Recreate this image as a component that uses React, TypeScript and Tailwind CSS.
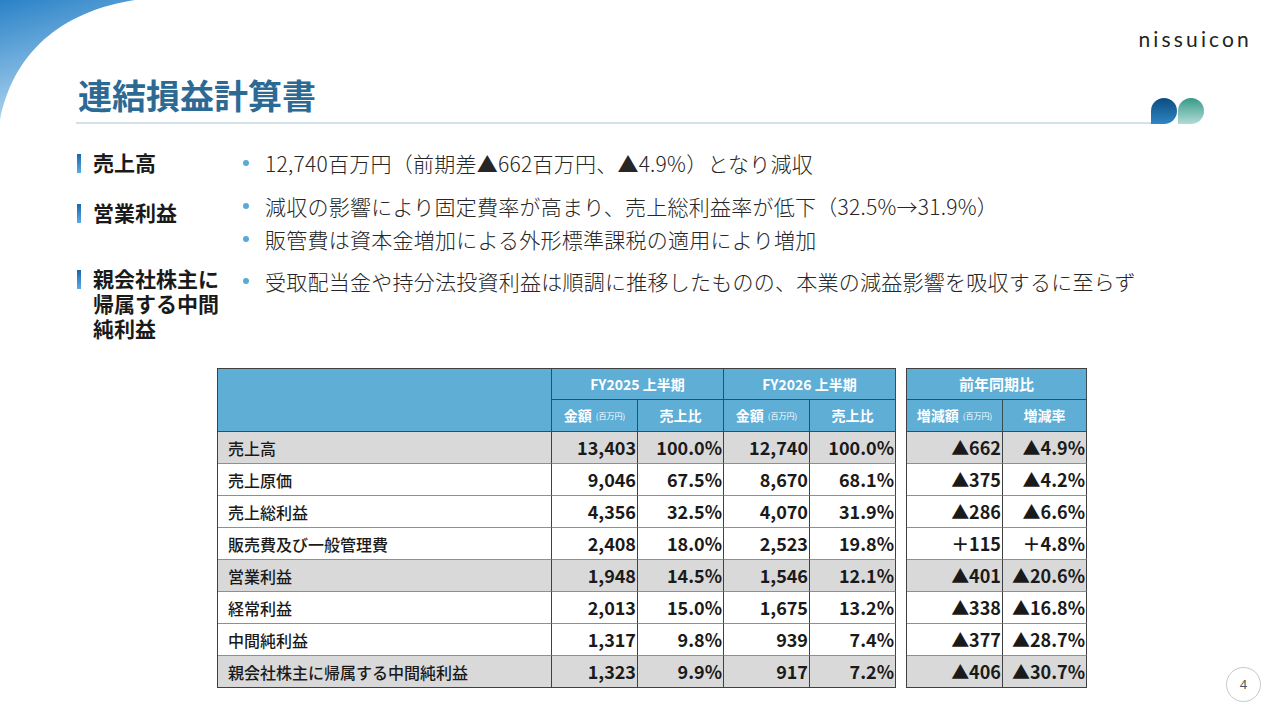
import React from "react";

type Row = {
  label: string;
  v: [string, string, string, string, string, string];
  shaded?: boolean;
};

const rows: Row[] = [
  { label: "売上高", v: ["13,403", "100.0%", "12,740", "100.0%", "▲662", "▲4.9%"], shaded: true },
  { label: "売上原価", v: ["9,046", "67.5%", "8,670", "68.1%", "▲375", "▲4.2%"] },
  { label: "売上総利益", v: ["4,356", "32.5%", "4,070", "31.9%", "▲286", "▲6.6%"] },
  { label: "販売費及び一般管理費", v: ["2,408", "18.0%", "2,523", "19.8%", "＋115", "＋4.8%"] },
  { label: "営業利益", v: ["1,948", "14.5%", "1,546", "12.1%", "▲401", "▲20.6%"], shaded: true },
  { label: "経常利益", v: ["2,013", "15.0%", "1,675", "13.2%", "▲338", "▲16.8%"] },
  { label: "中間純利益", v: ["1,317", "9.8%", "939", "7.4%", "▲377", "▲28.7%"] },
  { label: "親会社株主に帰属する中間純利益", v: ["1,323", "9.9%", "917", "7.2%", "▲406", "▲30.7%"], shaded: true },
];

function Label({ lines }: { lines: string[] }) {
  return (
    <div className="w-[163px] flex items-start">
      <div className="mt-[4px] w-[4px] h-[19px] bg-gradient-to-b from-[#1766ad] to-[#5aaee2]" />
      <div className="ml-[12px] text-[21px] leading-[25px] font-bold text-[#1a1a1a]">
        {lines.map((l) => (
          <div key={l}>{l}</div>
        ))}
      </div>
    </div>
  );
}

function Bullet({ text }: { text: string }) {
  return (
    <div className="flex items-center h-[26px]">
      <span className="ml-[3px] w-[6px] h-[6px] rounded-full bg-[#5ba9d6]" />
      <span className="ml-[16px] text-[21px] leading-[26px] tracking-[0.25px] font-light text-[#262626] whitespace-nowrap">
        {text}
      </span>
    </div>
  );
}

function Unit() {
  return <span className="ml-[4px] text-[8px] font-normal">(百万円)</span>;
}

const head = "bg-[#5eaed6] text-white font-bold text-[14px] flex items-center justify-center border-r border-b border-[#3c4a52]";

function cellCls(row: Row, last: boolean, extra: string) {
  return `${row.shaded ? "bg-[#d9d9d9]" : "bg-white"} border-r border-b border-r-[#404040] ${
    last ? "border-b-[#404040]" : "border-b-[#8f8f8f]"
  } flex items-center h-[32px] ${extra}`;
}

export default function App() {
  return (
    <div className="relative w-[1280px] h-[720px] overflow-hidden bg-white font-['Noto_Sans_CJK_JP','Noto_Sans',sans-serif] text-[#1a1a1a]">
      {/* corner arc */}
      <svg className="absolute top-0 left-0" width="140" height="125" viewBox="0 0 140 125">
        <defs>
          <linearGradient id="arc" x1="0" y1="0" x2="0.3" y2="1">
            <stop offset="0" stopColor="#2a82c7" />
            <stop offset="1" stopColor="#b4d8f2" />
          </linearGradient>
        </defs>
        <path d="M0 0 H135 C70 10 15 45 0 120 Z" fill="url(#arc)" />
      </svg>

      {/* brand */}
      <div className="h-[60px] pt-[27px] pr-[28px] flex justify-end">
        <span className="font-['Lato',sans-serif] text-[21px] leading-[24px] tracking-[0.15em] text-[#231f20]">
          nissuicon
        </span>
      </div>

      {/* title row */}
      <div className="mt-[15px] ml-[76px] w-[1128px] flex items-end">
        <div className="flex-1 pb-[7px] border-b-2 border-[#d3e1ea]">
          <h1 className="pl-[2px] text-[34px] leading-[40px] font-bold text-[#2c6a94]">連結損益計算書</h1>
        </div>
        <div className="flex gap-[1px]">
          <div className="w-[26px] h-[26px] rounded-t-full rounded-br-full bg-gradient-to-b from-[#0c4c80] to-[#2f86c4]" />
          <div className="w-[26px] h-[26px] rounded-t-full rounded-br-full bg-gradient-to-b from-[#2f9a8a] to-[#afdcd5]" />
        </div>
      </div>

      {/* summary */}
      <div className="mt-[26px] ml-[77px]">
        <div className="flex">
          <Label lines={["売上高"]} />
          <Bullet text="12,740百万円（前期差▲662百万円、▲4.9%）となり減収" />
        </div>
        <div className="flex mt-[17px]">
          <div className="pt-[7px]">
            <Label lines={["営業利益"]} />
          </div>
          <div className="flex flex-col gap-[7px]">
            <Bullet text="減収の影響により固定費率が高まり、売上総利益率が低下（32.5%→31.9%）" />
            <Bullet text="販管費は資本金増加による外形標準課税の適用により増加" />
          </div>
        </div>
        <div className="flex mt-[14px]">
          <Label lines={["親会社株主に", "帰属する中間", "純利益"]} />
          <div className="pt-[2px]">
            <Bullet text="受取配当金や持分法投資利益は順調に推移したものの、本業の減益影響を吸収するに至らず" />
          </div>
        </div>
      </div>

      {/* table */}
      <div className="mt-[27px] ml-[217px] flex gap-[10px]">
        <div className="grid grid-cols-[334px_86px_86px_86px_86px] grid-rows-[31px_32px] border-l border-t border-[#404040]">
          <div className={`${head} row-span-2`} />
          <div className={`${head} col-span-2`}>FY2025 上半期</div>
          <div className={`${head} col-span-2`}>FY2026 上半期</div>
          <div className={head}>
            金額<Unit />
          </div>
          <div className={head}>売上比</div>
          <div className={head}>
            金額<Unit />
          </div>
          <div className={head}>売上比</div>
          {rows.map((r, i) => {
            const last = i === rows.length - 1;
            return (
              <React.Fragment key={r.label}>
                <div className={cellCls(r, last, "pl-[10px] text-[16px] font-medium")}>{r.label}</div>
                {r.v.slice(0, 4).map((v, j) => (
                  <div key={j} className={cellCls(r, last, "justify-end pr-[1px] text-[18px] font-bold")}>
                    {v}
                  </div>
                ))}
              </React.Fragment>
            );
          })}
        </div>

        <div className="grid grid-cols-[96px_84px] grid-rows-[31px_32px] border-l border-t border-[#404040]">
          <div className={`${head} col-span-2 text-[15px]`}>前年同期比</div>
          <div className={head}>
            増減額<Unit />
          </div>
          <div className={head}>増減率</div>
          {rows.map((r, i) => {
            const last = i === rows.length - 1;
            return (
              <React.Fragment key={r.label}>
                {r.v.slice(4).map((v, j) => (
                  <div key={j} className={cellCls(r, last, "justify-end pr-[1px] text-[18px] font-bold")}>
                    {v}
                  </div>
                ))}
              </React.Fragment>
            );
          })}
        </div>
      </div>

      {/* page number */}
      <div className="absolute right-[19px] bottom-[18px] w-[35px] h-[35px] rounded-full border border-[#c8c8c8] flex items-center justify-center font-['Noto_Sans',sans-serif] text-[13px] text-[#555]">
        4
      </div>
    </div>
  );
}
